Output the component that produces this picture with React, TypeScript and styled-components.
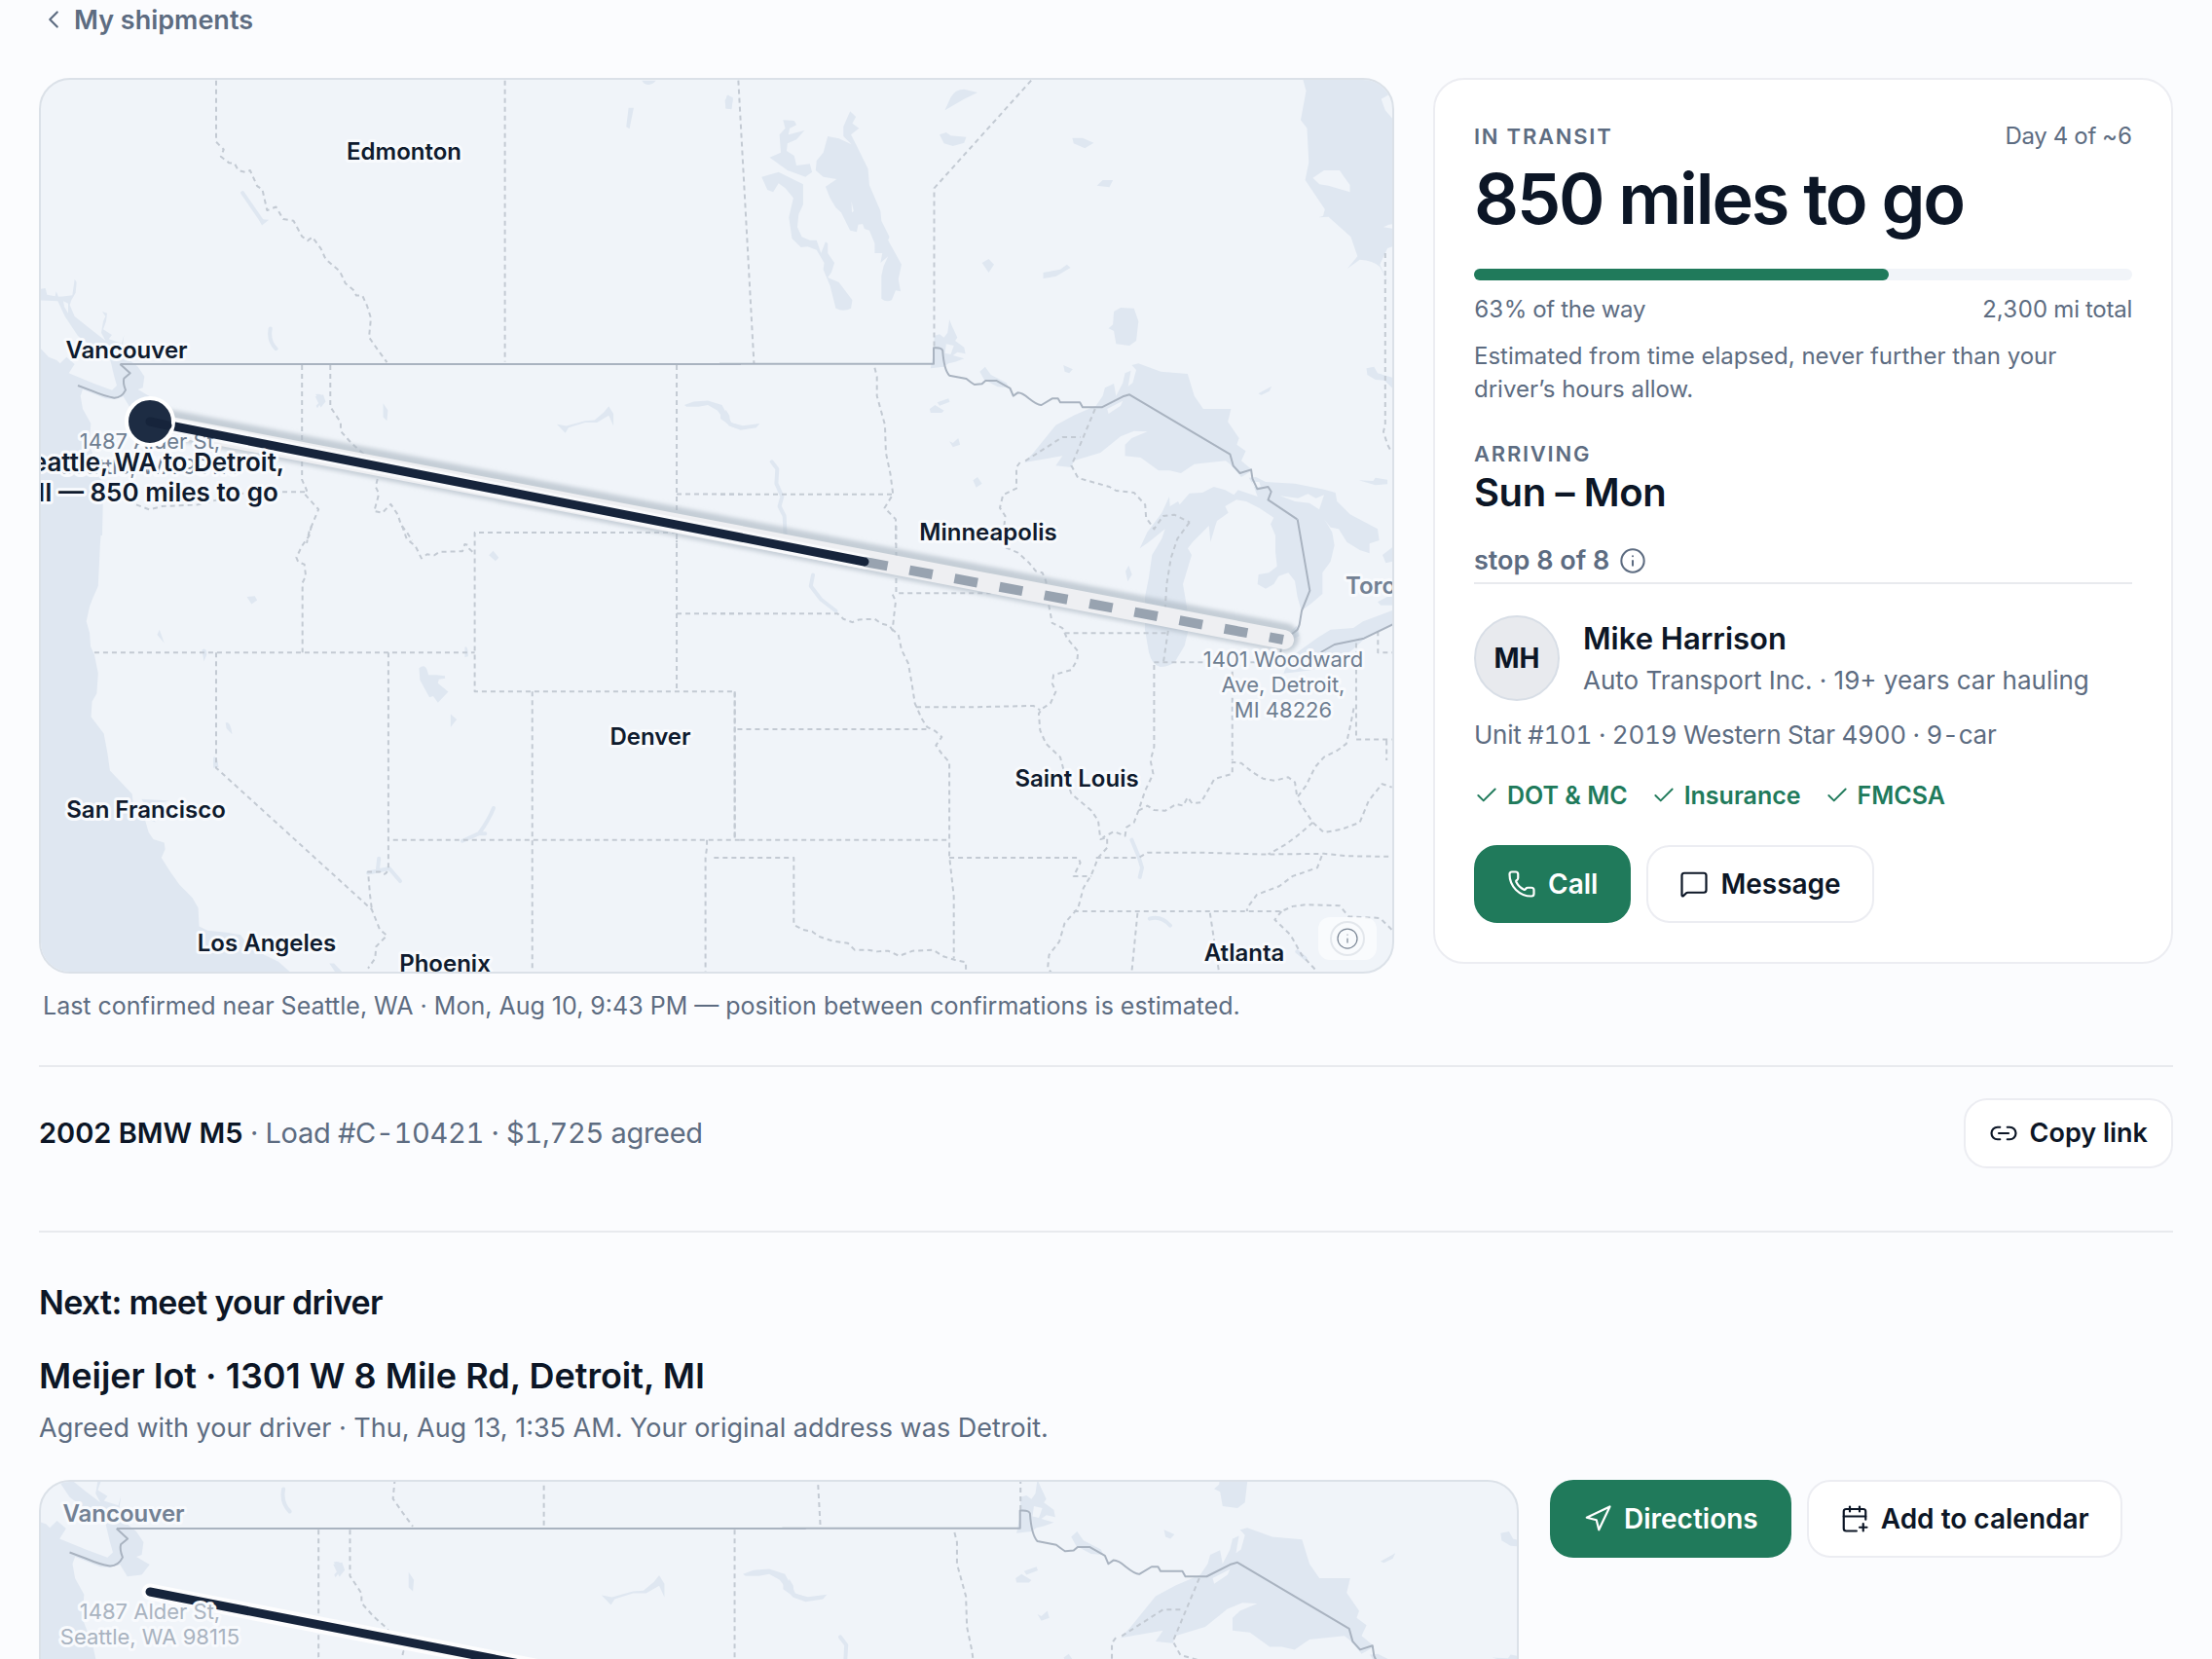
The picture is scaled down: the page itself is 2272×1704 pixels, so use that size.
import React from "react";
import styled, { createGlobalStyle, css } from "styled-components";
import {
  CalendarPlus,
  Check,
  ChevronLeft,
  Info,
  Link2,
  MessageSquare,
  Navigation,
  Phone,
} from "lucide-react";

const color = {
  page: "#fbfcfe",
  surface: "#ffffff",
  ink: "#0c1626",
  muted: "#5d6c81",
  line: "#e8eaee",
  cardLine: "#ecedf2",
  green: "#207a5b",
  track: "#f1f4f9",
  land: "#f0f4f9",
  water: "#dfe7f1",
  mapLine: "#dbe1e8",
  stateLine: "#c3cad3",
  nationLine: "#a9b3c0",
  route: "#16243b",
};

const GlobalStyle = createGlobalStyle`
  *, *::before, *::after { box-sizing: border-box; }
  body {
    margin: 0;
    background: ${color.page};
    color: ${color.ink};
    font-family: Inter, "Liberation Sans", sans-serif;
  }
  h1, h2, h3, p { margin: 0; }
`;

/* ---------- Text ---------- */

const Small = styled.p`
  font-size: 24px;
  line-height: 34px;
  color: ${color.muted};
`;

const Medium = styled.p`
  font-size: 26px;
  line-height: 36px;
  color: ${color.muted};
`;

const Overline = styled.p`
  font-size: 22px;
  line-height: 34px;
  font-weight: 600;
  letter-spacing: 0.08em;
  text-transform: uppercase;
  color: ${color.muted};
`;

const Figures = styled.span`
  font-variant-numeric: tabular-nums;
  letter-spacing: -0.01em;
`;

/* ---------- Page ---------- */

const Page = styled.main`
  height: 100vh;
  overflow: hidden;
  padding: 0 40px;
`;

const BackLink = styled.a`
  display: inline-flex;
  align-items: center;
  gap: 6px;
  height: 40px;
  font-size: 27px;
  font-weight: 600;
  color: ${color.muted};
  text-decoration: none;
`;

const Overview = styled.section`
  display: grid;
  grid-template-columns: minmax(0, 1fr) 760px;
  align-items: start;
  gap: 40px;
  margin-top: 40px;
`;

const Caption = styled.p`
  margin-top: 16px;
  padding: 0 4px;
  font-size: 25px;
  line-height: 34px;
  color: ${color.muted};
`;

/* ---------- Buttons ---------- */

const Button = styled.button<{ $primary?: boolean; $compact?: boolean }>`
  display: inline-flex;
  align-items: center;
  gap: 12px;
  height: ${(p) => (p.$compact ? 72 : 80)}px;
  padding: 0 ${(p) => (p.$compact ? 24 : 32)}px;
  border: 2px solid ${(p) => (p.$primary ? color.green : color.cardLine)};
  border-radius: 24px;
  background: ${(p) => (p.$primary ? color.green : color.surface)};
  color: ${(p) => (p.$primary ? "#ffffff" : color.ink)};
  font-family: inherit;
  font-size: ${(p) => (p.$compact ? 27 : 28)}px;
  line-height: 40px;
  font-weight: 600;
  white-space: nowrap;
  cursor: pointer;
`;

const ButtonRow = styled.div<{ $top?: number }>`
  display: flex;
  align-items: flex-start;
  gap: 16px;
  margin-top: ${(p) => p.$top ?? 0}px;
`;

/* ---------- Status card ---------- */

const Card = styled.aside`
  padding: 41px 40px 40px;
  border: 2px solid ${color.cardLine};
  border-radius: 32px;
  background: ${color.surface};
`;

const Split = styled.div`
  display: flex;
  justify-content: space-between;
  align-items: baseline;
`;

const Headline = styled.h1`
  margin-top: 11px;
  font-size: 72px;
  line-height: 72px;
  font-weight: 600;
  letter-spacing: -0.03em;
`;

const Progress = styled.div`
  height: 12px;
  margin: 36px 0 13px;
  border-radius: 6px;
  background: ${color.track};
`;

const ProgressFill = styled.div`
  height: 100%;
  border-radius: 6px;
  background: ${color.green};
`;

const Note = styled(Small)`
  margin-top: 14px;
`;

const Arrival = styled.div`
  margin-top: 32px;
`;

const ArrivalDays = styled.p`
  font-size: 40px;
  line-height: 46px;
  font-weight: 600;
  letter-spacing: -0.01em;
`;

const StopLine = styled.p`
  display: flex;
  align-items: center;
  gap: 10px;
  margin-top: 29px;
  font-size: 27px;
  line-height: 36px;
  font-weight: 600;
  color: ${color.muted};
`;

const Driver = styled.div`
  display: flex;
  align-items: center;
  gap: 24px;
  margin: 4px 0 17px;
  padding-top: 32px;
  border-top: 2px solid ${color.line};
`;

const Avatar = styled.div`
  display: grid;
  place-items: center;
  width: 88px;
  height: 88px;
  border: 2px solid #d8dee6;
  border-radius: 50%;
  background: #e8eaee;
  font-size: 28px;
  font-weight: 700;
`;

const DriverText = styled.div`
  display: grid;
  gap: 4px;
`;

const DriverName = styled.h2`
  font-size: 31px;
  line-height: 42px;
  font-weight: 600;
`;

const Checks = styled.ul`
  display: flex;
  gap: 24px;
  margin: 27px 0 0;
  padding: 0;
  list-style: none;
`;

const CheckItem = styled.li`
  display: flex;
  align-items: center;
  gap: 8px;
  font-size: 25px;
  line-height: 34px;
  font-weight: 600;
  color: ${color.green};
`;

/* ---------- Vehicle row ---------- */

const VehicleRow = styled.section`
  display: flex;
  justify-content: space-between;
  align-items: center;
  margin-top: 44px;
  padding: 32px 0 64px;
  border-top: 2px solid ${color.line};
  border-bottom: 2px solid ${color.line};
`;

const VehicleText = styled.p`
  font-size: 29px;
  line-height: 40px;
  color: ${color.muted};

  strong {
    font-weight: 600;
    color: ${color.ink};
  }
`;

/* ---------- Meeting ---------- */

const Meeting = styled.section`
  padding-top: 48px;
`;

const SectionTitle = styled.h2`
  font-size: 34px;
  line-height: 48px;
  font-weight: 600;
  letter-spacing: -0.02em;
`;

const Place = styled.h3`
  margin: 27px 0 12px;
  font-size: 36px;
  line-height: 48px;
  font-weight: 600;
`;

const Agreement = styled.p`
  font-size: 27px;
  line-height: 36px;
  color: ${color.muted};
`;

const MeetingGrid = styled.div`
  display: grid;
  grid-template-columns: minmax(0, 1fr) 640px;
  gap: 32px;
  margin-top: 35px;
`;

/* ---------- Map ---------- */

const MapFrame = styled.div<{ $height: number }>`
  position: relative;
  height: ${(p) => p.$height}px;
  overflow: hidden;
  border: 2px solid ${color.mapLine};
  border-radius: 32px;
  background: ${color.land};
`;

const MapCanvas = styled.svg`
  display: block;
  width: 100%;
  height: 100%;
`;

const outline = css`
  fill: none;
  stroke-linejoin: round;
  vector-effect: non-scaling-stroke;
`;

const Water = styled.path`
  fill: ${color.water};
  fill-rule: evenodd;
`;

const River = styled.path`
  ${outline}
  stroke: ${color.water};
  stroke-width: 4px;
  stroke-linecap: round;
`;

const StateLine = styled.path`
  ${outline}
  stroke: ${color.stateLine};
  stroke-width: 2px;
  stroke-dasharray: 5 4;
`;

const NationLine = styled.path`
  ${outline}
  stroke: ${color.nationLine};
  stroke-width: 2px;
`;

const RouteLine = styled.line`
  stroke-linecap: round;
`;

const MapText = styled.text<{ $kind: "city" | "muted" | "address" | "faint" | "title" }>`
  font-family: Inter, "Liberation Sans", sans-serif;
  font-size: ${(p) => ({ city: 24, muted: 24, address: 22, faint: 22, title: 26 })[p.$kind]}px;
  font-weight: ${(p) => (p.$kind === "address" || p.$kind === "faint" ? 400 : 600)};
  fill: ${(p) =>
    ({ city: "#0f1b2e", muted: "#738194", address: "#6f7e91", faint: "#a9b3c0", title: "#0f1b2e" })[p.$kind]};
  stroke: #f8fafd;
  stroke-width: 6px;
  stroke-linejoin: round;
  paint-order: stroke;
`;

const MapInfoButton = styled.button`
  position: absolute;
  right: 16px;
  bottom: 12px;
  display: grid;
  place-items: center;
  width: 60px;
  height: 44px;
  padding: 0;
  border: 0;
  border-radius: 12px;
  background: rgba(255, 255, 255, 0.6);
  color: #7b8796;
`;

const MapInfoRing = styled.span`
  display: grid;
  place-items: center;
  width: 36px;
  height: 36px;
  border: 2px solid #e3e7ec;
  border-radius: 50%;
`;

type Tile = {
  transform: string;
  water?: string;
  rivers?: string;
  states?: string;
  nation?: string;
};

const tiles: Tile[] = [
  {
    // British Columbia, Alberta, Washington
    transform: "scale(.48469 .35714)",
    water:
      "M548 630L570 632 555 648ZM668 1140L685 1135 690 1155 680 1172 675 1160ZM812 1160L822 1180 820 1210 812 1200ZM1180 1220L1200 1225 1240 1210 1260 1208 1280 1185 1290 1168 1300 1190V1225L1290 1195 1265 1215 1240 1215 1205 1230 1198 1245ZM1360 232H1390Q1380 250 1365 240ZM1332 310H1343L1334 370 1327 365ZM1540 275L1553 280 1550 315 1538 310ZM1450 1165L1470 1155 1500 1152 1530 1165 1540 1190 1550 1215 1570 1225V1235L1545 1225 1520 1180 1500 1165 1480 1170 1455 1170Z",
    rivers: "M514 555L555 635M573 945Q568 980 585 1003",
    states:
      "M458 232V408L474 430 468 450 485 468 497 470 505 490 520 495 530 490 545 535 556 545 566 605 585 595 600 630 622 635 640 680 652 692 662 682 680 715 690 745 720 780 732 815 750 835 755 850 768 850 778 880 786 915 782 970 800 1005 820 1042M1070 232V1040M640 1050V1380L650 1410 645 1420 675 1465 655 1530 650 1562M700 1050V1170L722 1215V1240L745 1275 770 1305 802 1365 796 1400 803 1420 793 1470 810 1475 828 1450 843 1480 850 1510 862 1530 873 1555M1434 1050V1560M1434 1421H1568",
    nation: "M255 1047H1570",
  },
  {
    // Manitoba, Ontario, upper Great Lakes
    transform: "translate(740 60) scale(.45918 .33333)",
    water:
      "M1302 60L1310 100 1298 190 1312 215 1316 320 1308 375 1352 465 1348 485 1338 490 1360 488 1410 550 1425 610 1402 648 1430 620Q1460 622 1475 642L1497 700 1480 650 1475 635 1492 585 1506 578V190L1487 160 1478 125 1495 112 1506 120V60ZM1325 368L1350 345H1385L1395 365 1408 390V412L1360 392 1340 388ZM1483 520L1495 512 1506 510V525Z" +
      "M240 240L265 247 293 265 275 240 275 210 290 163 303 180 295 200 310 215 292 235 305 270 330 340 333 390 358 470 360 500 378 550 375 560 405 635 398 680 403 718 392 715 383 745Q370 752 360 740V670L365 640 375 610 358 630 362 600 345 600 345 570 333 530 322 525 318 510 308 512 305 535 290 530 270 475 258 460 245 430 235 395 260 372 230 365 213 345 215 315 230 290ZM293 440L298 470 294 475Z" +
      "M140 190L165 192 170 205 155 215 152 235 188 222 170 250 150 262 148 285 165 300 170 330 200 325 205 350 190 365 170 355 150 345 110 305 135 290 132 235 145 215Z" +
      "M92 365L130 350 185 388V450L175 480 172 520 182 550 200 560 215 560 225 600 235 565 240 570V600L255 630 248 660 240 675 265 690 295 745 292 770Q275 782 258 770L245 700 230 650 232 630 215 590 195 580 180 582 160 555 153 490 163 430 145 400 130 385 118 412 105 405Z" +
      "M502 160L515 120Q525 95 545 95L575 105 545 125ZM490 235L505 228 515 238 550 242 545 260 520 270 500 262ZM787 245H810L835 260 815 277 790 262ZM842 392L855 375H878L870 397ZM585 630L600 618 612 635 600 660ZM722 660L760 650 775 635 783 645 750 672 722 678ZM880 780L895 768 925 770 935 810 930 870 915 885 885 880 880 840 868 832 878 820ZM767 945L788 958 780 970 770 965Z" +
      "M478 855L490 850 500 860 508 845 512 805 518 825 530 860 525 870 545 890 548 910 530 905 520 915 545 925 525 935 510 940 500 950 470 955 478 900ZM505 880L522 885 515 912 502 908ZM580 965L592 950 605 975 640 1000 645 1015 620 1012 590 990ZM468 1080L480 1068 500 1085 495 1092H470ZM485 1060L510 1048 513 1058 490 1070ZM512 1180L520 1185 532 1170 536 1190 520 1198ZM565 1300L575 1290 585 1310 572 1322ZM1203 1033L1233 1010 1228 1025 1210 1037ZM1445 955L1462 950 1470 970 1506 985V1020L1485 992 1465 990 1447 975ZM1428 1300L1460 1302 1465 1292 1492 1298V1312L1465 1315ZM17 112L28 125 25 155 12 155 10 130ZM0 1085L10 1095 12 1082 20 1100 22 1122 50 1132 88 1125 80 1138 45 1145 25 1135 0 1110Z" +
      "M680 1245L700 1215 750 1130 790 1100 840 1070 855 1040 860 1015 880 1002 885 1040 900 1000 905 970 918 962 912 1010 922 1000 930 960 920 945 935 940 985 965 1045 972 1060 1040 1080 1080H1142L1135 1120 1160 1170 1155 1190 1175 1210 1165 1240 1187 1265 1190 1270 1165 1290 1150 1265 1140 1250 1130 1240 1060 1250 1030 1278 1005 1270 980 1270 940 1230 905 1225 905 1190 920 1170 955 1150 925 1148 895 1165 850 1215 790 1240 785 1260 750 1255 765 1225ZM865 1080L900 1055 895 1070 868 1095Z",
    rivers: "M115 1243L127 1265 125 1310 138 1350 132 1380 143 1410 145 1470",
    states:
      "M40 68L75 940M0 1343H388M345 953L350 980 350 1040 368 1130 370 1215 380 1280 386 1343 367 1385 392 1420V1498M670 1245L662 1260V1325L632 1345 625 1385 637 1410 630 1500M682 1240L765 1167H805M838 1080L785 1255 800 1293 870 1320 885 1332 925 1338 950 1375 952 1415 970 1450 990 1410 1015 1406 1050 1430M695 68L478 400V890M1487 600V1130L1483 1150 1492 1190 1502 1215",
    nation:
      "M-2 941H477V892Q495 890 497 900 500 960 512 977L550 987Q562 1000 568 1005L585 1003 593 993H617L648 1017 655 1040 665 1030Q675 1030 690 1048 710 1070 718 1068L742 1048H755L760 1060H804L810 1075H853L900 1042 915 1036 1140 1220 1147 1255 1162 1278 1187 1267 1190 1295 1201 1327 1225 1320 1232 1335 1225 1360 1290 1420",
  },
  {
    // Pacific coast and the mountain states
    transform: "translate(0 540) scale(.48469 .34439)",
    water:
      "M84 0H215L212 60 208 180 197 215 190 240 183 285 190 320 192 360 200 385 208 440 205 500 195 525 193 570 220 620 228 680 233 730 260 770 280 800 285 860 308 880 315 915 325 935 348 945 350 965 342 990 360 1030 380 1070 408 1110 420 1140 422 1195 440 1207 480 1213 510 1220 525 1250 560 1280 590 1300 618 1335H84ZM698 1305L708 1305 728 1335H712ZM300 815L360 820 330 830 310 840ZM305 870L325 875 330 885Z" +
      "M1036 88L1045 75 1057 95 1050 105ZM888 425Q900 410 905 430L908 445 925 445 943 448V455L930 458 928 470 950 495 928 528 918 508 910 512 890 460ZM955 562L968 578 955 600ZM523 212L540 210 545 222 533 234ZM338 310L348 350 333 325ZM428 370Q438 360 438 385L432 405ZM478 588Q488 580 492 622L480 605ZM452 690Q462 685 463 720L452 722ZM985 362Q992 355 992 390L985 392Z",
    rivers: "M1046 842Q1035 880 1015 918L980 940M1015 918H1028M803 992L800 1030M780 1035L825 1022 848 1060",
    states:
      "M660 0L655 30 640 60 628 95 632 108 645 115 648 150 641 170V378M852 0L862 40 880 60 893 97 905 85 920 88 932 78 980 76 985 55 992 58 995 70 1005 82M1434 20H1006V494H1557V937M1434 0V494M1434 262H1568M200 378H1006M458 378V722L788 1145 805 1205 820 1222 797 1255 795 1290 780 1320M823 378V1025Q815 1050 805 1032H780L784 1100 788 1145M833 937H1568M1128 494V1332M1498 937V960L1495 990V1332M1513 990H1568",
  },
  {
    // Plains, Midwest and the South
    transform: "translate(740 540) scale(.45918 .34439)",
    rivers: "M207 147L202 180 225 220 258 254M920 937L935 985 943 1020 938 1048M960 1172Q985 1162 1006 1192M1290 1270L1308 1290",
    states:
      "M0 262H262L275 278 295 288 310 280 345 278 360 292 378 298 388 318M32 494V937M44 937H512M44 990H164V1190L185 1205 205 1210 220 1225 250 1238 285 1245 300 1265 330 1265 350 1270 375 1268 400 1283 430 1268 475 1265 500 1285 525 1295 549 1302V1332M38 607H462M393 0V201H732M385 205L392 225 388 270 385 310 398 325 405 370 420 410 428 470 435 530 450 575 462 600 480 612 495 630 482 655 495 680 512 705V985L514 1010 522 1105V1290M438 541H560L700 537 715 550" +
      "M638 65L665 80 690 110 705 135 720 140 728 165 735 240 742 290 765 305 775 335 800 375 798 400 785 430 745 445 742 470 750 495 738 530 720 545 712 560 715 610 728 650 760 690 770 740 785 800 830 850 845 880 850 935 865 930 865 960 845 990 830 1040 812 1080 800 1140 790 1155 770 1185 758 1240 735 1280 732 1320 740 1332" +
      "M770 320H1000M970 415V660L962 700 968 740 950 790 935 850 925 885 908 900 905 925 880 912 855 930M970 407H1250M1145 435V700M935 850L955 835 970 848 995 850 1020 830 1035 835 1045 810 1055 828 1075 825 1105 755 1145 740 1145 705 1165 708 1190 735 1215 755 1240 760 1270 750 1285 765 1290 810 1310 775 1330 720 1350 690 1380 670 1400 650 1410 590 1418 535M1422 350V637H1502M1490 640V700" +
      "M1293 820L1310 855 1325 885 1350 915 1390 905 1430 885 1450 820 1480 770 1502 780M1325 885L1290 925 1265 950 1225 980M840 990H935L955 975H1080L1215 980 1350 978 1400 985 1504 987M1345 985L1335 1020 1280 1045 1250 1075 1200 1100 1178 1140V1150M512 990H800L805 1005 790 1045H830M790 1150H1255L1280 1135 1310 1130 1385 1133 1405 1165 1475 1170 1502 1205M933 1155L920 1330M1095 1155L1115 1330M1255 1150L1240 1175 1275 1220 1300 1280 1335 1330",
  },
  {
    // Lakes Michigan, Huron and Erie
    transform: "translate(1100 400) scale(.33333)",
    water:
      "M212 490L235 440 280 380 303 330 305 360 330 345 335 355 365 320 405 318 440 300 475 310 502 325 515 310 575 330 562 295 548 272 570 270 600 285 690 290 780 308 815 318 820 345 860 385 945 430 950 465 920 475 920 505 890 495 850 470 825 430 800 425 780 400 790 415 805 440 812 480 800 530 775 565 775 630 740 660 710 682 698 640 690 590 670 565 640 575 625 600 600 614 575 600 578 570 610 565 635 545 630 500 630 450 615 415 625 395 580 365 540 345 510 340 475 360 485 380 450 405 445 420 430 470 425 420 405 440 375 470 360 490 372 510 345 600 352 640 360 690 362 740 350 790 320 840Q300 855 275 855 250 850 240 810L228 740V640L240 580 250 510 280 460 290 430 265 450 240 470Z" +
      "M645 328L700 335 730 322 755 335 780 325 765 370 735 350 690 345ZM558 285L580 285 585 300 565 300ZM960 510L992 485V530L970 535ZM945 655L992 630V665L955 665ZM690 815L760 765 800 740 870 735 900 715 992 680V722L905 768 870 800 830 830 740 865 700 870 655 875 665 850ZM678 745L695 728 704 760 685 768ZM168 560L178 542 188 570 175 592Z",
    states: "M365 410L328 460 308 520 295 600 290 680 300 740 285 840M946 745V811H990",
    nation: "M698 400L736 620 711 682 704 725 698 740 678 756 650 775 646 810M770 810L812 786 903 767 992 724",
  },
  {
    // Salish Sea
    transform: "translate(30 270) scale(.33333)",
    water:
      "M30 100L36 80 50 78 55 98 80 103 83 88 90 104 110 103 133 100 140 50 146 60 143 92 130 115 125 130 140 165 190 205 235 240 222 215 228 180 235 165 225 150 240 155 237 180 228 205 255 222 245 235 285 248 292 222 288 255 310 300 335 320 355 350 350 385 335 390 372 412 350 440 310 445 290 412 262 420 235 418 165 390 158 410 165 450 190 495 185 560 215 640 228 700 225 840H30V258L60 290 85 300 95 310 115 290 140 312 122 340 200 372 255 392 270 378 262 350 250 300 150 225 110 165 88 118 30 115ZM105 118L120 125V155L108 135Z" +
      "M882 405Q905 400 905 420L912 425 898 432 888 448 884 440 898 425Z",
    states: "M330 745L370 760 410 750 460 748 520 745 560 735 600 725 640 712 720 706H850",
    nation: "M280 312L311 340 292 356Q288 370 297 392 285 416 262 416 235 412 195 395L150 378",
  },
];

function Basemap() {
  return (
    <>
      {tiles.map((t) => (
        <g key={t.transform} transform={t.transform}>
          {t.water && <Water d={t.water} />}
          {t.rivers && <River d={t.rivers} />}
        </g>
      ))}
      {tiles.map((t) => (
        <g key={t.transform} transform={t.transform}>
          {t.states && <StateLine d={t.states} />}
          {t.nation && <NationLine d={t.nation} />}
        </g>
      ))}
    </>
  );
}

type Label = {
  x: number;
  y: number;
  kind: "city" | "muted" | "address" | "faint" | "title";
  lines: string[];
  step?: number;
  start?: boolean;
};

const originLabel: Label = {
  x: 154,
  y: 461,
  kind: "address",
  lines: ["1487 Alder St,", "Seattle, WA 98115"],
  step: 26,
};

const placeLabels: Label[] = [
  { x: 415, y: 164, kind: "city", lines: ["Edmonton"] },
  { x: 130, y: 368, kind: "city", lines: ["Vancouver"] },
  { x: 150, y: 840, kind: "city", lines: ["San Francisco"] },
  { x: 668, y: 765, kind: "city", lines: ["Denver"] },
  { x: 274, y: 977, kind: "city", lines: ["Los Angeles"] },
  { x: 457, y: 998, kind: "city", lines: ["Phoenix"] },
  { x: 1015, y: 555, kind: "city", lines: ["Minneapolis"] },
  { x: 1106, y: 808, kind: "city", lines: ["Saint Louis"] },
  { x: 1278, y: 987, kind: "city", lines: ["Atlanta"] },
  { x: 1382, y: 610, kind: "muted", lines: ["Toronto"], start: true },
  { x: 1318, y: 685, kind: "address", lines: ["1401 Woodward", "Ave, Detroit,", "MI 48226"], step: 26 },
];

const positionLabel: Label = {
  x: 154,
  y: 484,
  kind: "title",
  lines: ["Seattle, WA to Detroit,", "MI — 850 miles to go"],
  step: 31,
};

const meetingLabels: Label[] = [
  { x: 127, y: 1563, kind: "muted", lines: ["Vancouver"] },
  { x: 154, y: 1663, kind: "faint", lines: ["1487 Alder St,", "Seattle, WA 98115"], step: 26 },
];

function MapLabel({ label }: { label: Label }) {
  return (
    <>
      {label.lines.map((line, i) => (
        <MapText
          key={line}
          $kind={label.kind}
          x={label.x}
          y={label.y + i * (label.step ?? 0)}
          textAnchor={label.start ? "start" : "middle"}
        >
          {line}
        </MapText>
      ))}
    </>
  );
}

function ShipmentMap() {
  return (
    <MapFrame $height={920}>
      <MapCanvas viewBox="42 82 1388 916" preserveAspectRatio="xMinYMin slice" role="img" aria-label="Route map">
        <defs>
          <filter id="casing" x="-5%" y="-20%" width="110%" height="140%">
            <feGaussianBlur stdDeviation="2" />
          </filter>
        </defs>
        <Basemap />
        <RouteLine x1={154} y1={432} x2={1319} y2={655} stroke="#a9b4c0" strokeOpacity={0.6} strokeWidth={30} filter="url(#casing)" />
        <RouteLine x1={154} y1={434} x2={1319} y2={657} stroke="#eeeff2" strokeWidth={20} />
        <RouteLine x1={154} y1={433} x2={888} y2={577} stroke="#f9fafc" strokeWidth={15} />
        <line x1={888} y1={577} x2={1318} y2={657} stroke="#98a3b0" strokeWidth={10} strokeDasharray="24 23" />
        <MapLabel label={originLabel} />
        <RouteLine x1={154} y1={433} x2={888} y2={577} stroke={color.route} strokeWidth={9} />
        {placeLabels.map((l) => (
          <MapLabel key={l.lines[0]} label={l} />
        ))}
        <MapLabel label={positionLabel} />
        <circle cx={154} cy={433} r={24} fill="#1d2c43" stroke="#ffffff" strokeWidth={4} />
        <RouteLine x1={154} y1={433} x2={172} y2={437} stroke={color.route} strokeWidth={9} />
      </MapCanvas>
      <MapInfoButton type="button" aria-label="Map attribution">
        <MapInfoRing>
          <Info size={24} strokeWidth={1.25} />
        </MapInfoRing>
      </MapInfoButton>
    </MapFrame>
  );
}

function MeetingMap() {
  return (
    <MapFrame $height={640}>
      <MapCanvas viewBox="42 1522 1516 636" preserveAspectRatio="xMinYMin slice" role="img" aria-label="Meeting place map">
        <g transform="matrix(1.1105 0 0 1.1105 -17.3 1154.7)">
          <Basemap />
        </g>
        <RouteLine x1={154} y1={1635} x2={970} y2={1794} stroke="#fdfdfe" strokeWidth={17} />
        <RouteLine x1={154} y1={1635} x2={970} y2={1794} stroke={color.route} strokeWidth={9} />
        {meetingLabels.map((l) => (
          <MapLabel key={l.lines[0]} label={l} />
        ))}
      </MapCanvas>
    </MapFrame>
  );
}

const credentials = ["DOT & MC", "Insurance", "FMCSA"];

function StatusCard({ progress }: { progress: number }) {
  return (
    <Card>
      <Split>
        <Overline>In transit</Overline>
        <Small>
          <Figures>Day 4 of ~6</Figures>
        </Small>
      </Split>
      <Headline>850 miles to go</Headline>
      <Progress role="progressbar" aria-label="Distance covered" aria-valuenow={progress} aria-valuemin={0} aria-valuemax={100}>
        <ProgressFill style={{ width: `${progress}%` }} />
      </Progress>
      <Split>
        <Small>
          <Figures>{progress}% of the way</Figures>
        </Small>
        <Small>
          <Figures>2,300 mi total</Figures>
        </Small>
      </Split>
      <Note>Estimated from time elapsed, never further than your driver’s hours allow.</Note>
      <Arrival>
        <Overline>Arriving</Overline>
        <ArrivalDays>Sun – Mon</ArrivalDays>
      </Arrival>
      <StopLine>
        stop 8 of 8
        <Info size={28} strokeWidth={1.75} />
      </StopLine>
      <Driver>
        <Avatar>MH</Avatar>
        <DriverText>
          <DriverName>Mike Harrison</DriverName>
          <Medium>Auto Transport Inc. · 19+ years car hauling</Medium>
        </DriverText>
      </Driver>
      <Medium>
        <Figures>Unit #101 · 2019 Western Star 4900 · 9-car</Figures>
      </Medium>
      <Checks>
        {credentials.map((name) => (
          <CheckItem key={name}>
            <Check size={26} strokeWidth={1.75} />
            {name}
          </CheckItem>
        ))}
      </Checks>
      <ButtonRow $top={34}>
        <Button type="button" $primary>
          <Phone size={30} strokeWidth={1.75} />
          Call
        </Button>
        <Button type="button">
          <MessageSquare size={30} strokeWidth={1.75} />
          Message
        </Button>
      </ButtonRow>
    </Card>
  );
}

export default function App() {
  return (
    <>
      <GlobalStyle />
      <Page>
        <BackLink href="#shipments">
          <ChevronLeft size={30} strokeWidth={1.75} />
          My shipments
        </BackLink>
        <Overview>
          <div>
            <ShipmentMap />
            <Caption>
              Last confirmed near Seattle, WA · Mon, Aug 10, 9:43 PM — position between confirmations is estimated.
            </Caption>
          </div>
          <StatusCard progress={63} />
        </Overview>
        <VehicleRow>
          <VehicleText>
            <strong>2002 BMW M5</strong>
            <Figures> · Load #C-10421 · $1,725 agreed</Figures>
          </VehicleText>
          <Button type="button" $compact>
            <Link2 size={30} strokeWidth={1.75} />
            Copy link
          </Button>
        </VehicleRow>
        <Meeting>
          <SectionTitle>Next: meet your driver</SectionTitle>
          <Place>Meijer lot · 1301 W 8 Mile Rd, Detroit, MI</Place>
          <Agreement>Agreed with your driver · Thu, Aug 13, 1:35 AM. Your original address was Detroit.</Agreement>
          <MeetingGrid>
            <MeetingMap />
            <ButtonRow>
              <Button type="button" $primary>
                <Navigation size={30} strokeWidth={1.75} />
                Directions
              </Button>
              <Button type="button">
                <CalendarPlus size={30} strokeWidth={1.75} />
                Add to calendar
              </Button>
            </ButtonRow>
          </MeetingGrid>
        </Meeting>
      </Page>
    </>
  );
}
